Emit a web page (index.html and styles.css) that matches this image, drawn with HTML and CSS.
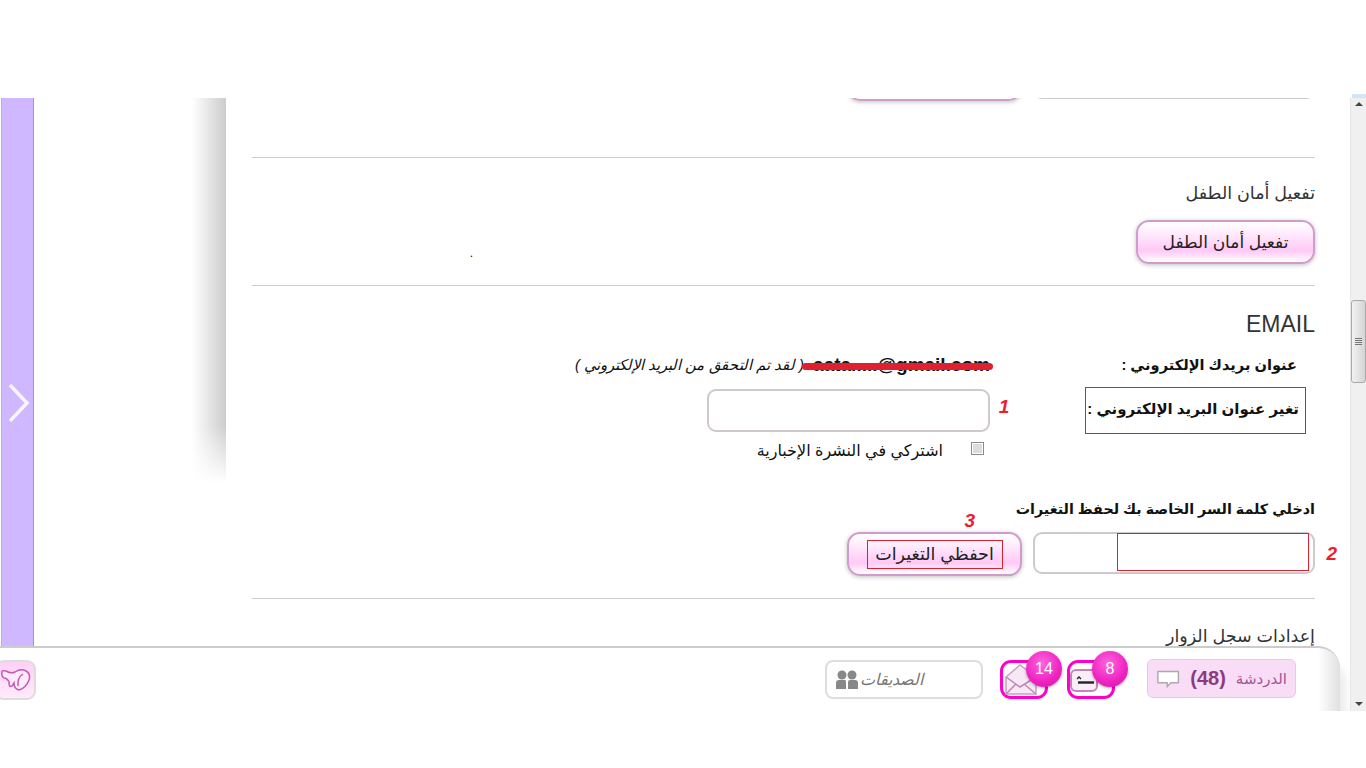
FILE: index.html
```html
<!DOCTYPE html>
<html lang="ar">
<head>
    <meta charset="UTF-8">
    <title>إعدادات الحساب</title>
    <link rel="stylesheet" href="styles.css">
</head>
<body>
    <div class="top-sliver"></div>
    <div class="viewport">
        <div class="rail">
            <svg class="rail-arrow" width="22" height="40" viewBox="0 0 22 40"><path d="M2 2 L19 20 L2 38" fill="none" stroke="#fff" stroke-width="3.5" opacity=".85"/></svg>
        </div>
        <div class="drop-shadow"></div>

        <div class="content" dir="rtl">
            <div class="section section-first">
                <div class="save-row">
                    <div class="field field-wide"></div>
                    <button class="btn btn-save"></button>
                </div>
            </div>

            <div class="section section-child">
                <h2>تفعيل أمان الطفل</h2>
                <div class="child-row">
                    <button class="btn btn-child">تفعيل أمان الطفل</button>
                    <span class="dot">.</span>
                </div>
            </div>

            <div class="section section-email">
                <h2 class="email-title">EMAIL</h2>
                <div class="email-row">
                    <b class="email-label">عنوان بريدك الإلكتروني :</b>
                    <span class="email-value" dir="ltr">aata.....@gmail.com<i class="strike"></i></span>
                    <i class="email-note">( لقد تم التحقق من البريد الإلكتروني )</i>
                </div>
                <div class="change-row">
                    <b class="change-label">تغير عنوان البريد الإلكتروني :</b>
                    <span class="mark mark-one">1</span>
                    <div class="field field-email"></div>
                </div>
                <label class="news-row">
                    <input class="news-check" type="checkbox">
                    <span>اشتركي في النشرة الإخبارية</span>
                </label>
                <b class="pass-label">ادخلي كلمة السر الخاصة بك لحفظ التغيرات</b>
                <div class="save-row">
                    <div class="field field-wide">
                        <div class="pass-box"></div>
                        <span class="mark mark-two">2</span>
                    </div>
                    <button class="btn btn-save">
                        <span class="mark mark-three">3</span>
                        <span class="save-text">احفظي التغيرات</span>
                    </button>
                </div>
            </div>

            <div class="section section-last">
                <h2>إعدادات سجل الزوار</h2>
            </div>
        </div>

        <div class="scrollbar">
            <span class="arrow-up"></span>
            <div class="thumb"><span class="grip"></span></div>
            <span class="arrow-down"></span>
        </div>

        <div class="bottom-bar" dir="rtl">
            <div class="bar-items">
                <div class="chat">
                    <span class="chat-name">الدردشة</span>
                    <b class="chat-count">(48)</b>
                    <svg width="26" height="20" viewBox="0 0 26 20"><path d="M2 2 H24 V14 H16 L12 18 V14 H2 Z" fill="#fff" stroke="#aaa" stroke-width="1.5"/></svg>
                </div>
                <div class="notice notice-photo">
                    <svg class="notice-icon" width="30" height="26" viewBox="0 0 30 26"><rect x="1" y="3" width="26" height="21" rx="5" fill="#fbeef9" stroke="#c285b8" stroke-width="2"/><path d="M7 12 L9 10 L11 12" fill="none" stroke="#222" stroke-width="1.3"/><path d="M8 15.500 H24" stroke="#222" stroke-width="2.400"/></svg>
                    <span class="badge badge-photo">8</span>
                </div>
                <div class="notice notice-mail">
                    <svg class="notice-icon" width="36" height="32" viewBox="0 0 36 32"><path d="M3 13 L17 1 L33 13 V30 H3 Z" fill="#f6e9f3" stroke="#c9a0c2" stroke-width="1.500"/><path d="M3 13 L17 23 L33 13 M3 30 L13 20 M33 30 L21 20" fill="none" stroke="#c285b8" stroke-width="1.500"/></svg>
                    <span class="badge badge-mail">14</span>
                </div>
                <div class="friends">
                    <i class="friends-name">الصديقات</i>
                    <svg width="24" height="20" viewBox="0 0 24 20"><circle cx="7" cy="5" r="4.500" fill="#888"/><circle cx="17" cy="5" r="4.500" fill="#888"/><path d="M1 19 V13 Q1 10 4 10 H10 Q11 10 11 12 V19 Z M13 19 V12 Q13 10 15 10 H20 Q23 10 23 13 V19 Z" fill="#888"/></svg>
                </div>
            </div>
            <div class="logo-btn">
                <svg width="30" height="24" viewBox="0 0 30 24"><path d="M1 4 Q1 2 5 3 Q10 6 14 4 Q20 0 25 3 Q30 6 28 12 Q25 20 18 22 Q13 21 13 15 L11 18 Q8 20 8 14 Q6 10 3 10 Q0 8 1 4 Z" fill="#ffeafb" stroke="#c25ab4" stroke-width="1.500"/><path d="M22 6 Q16 10 17 18" fill="none" stroke="#c25ab4" stroke-width="1.500"/></svg>
            </div>
        </div>
    </div>
</body>
</html>
```

FILE: styles.css
```css
html, body {
    margin: 0;
    padding: 0;
    background: #fff;
    overflow: hidden;
}
body {
    height: 768px;
    font-family: "Liberation Sans", "DejaVu Sans", sans-serif;
    color: #111;
}
.top-sliver {
    height: 4px;
    width: 14px;
    margin: 94px 0 0 auto;
    background: #d5e4f5;
}
.viewport {
    position: relative;
    display: flex;
    height: 613px;
    overflow: hidden;
}

/* left rail */
.rail {
    flex: none;
    position: relative;
    width: 31px;
    margin-left: 1px;
    background: #cfb8ff;
    border-left: 1px solid #c0a6ee;
    border-right: 1px solid #b08cd8;
}
.rail-arrow {
    position: absolute;
    left: 6px;
    top: 285px;
}
.drop-shadow {
    flex: none;
    width: 34px;
    height: 385px;
    margin-left: 158px;
    background:
        linear-gradient(to bottom, rgba(255,255,255,0) 85%, #fff 100%),
        linear-gradient(to right, rgba(255,255,255,0), #ccc);
}

/* content */
.content {
    flex: none;
    width: 1063px;
    margin-left: 26px;
}
h2 {
    margin: 0;
    font-size: 17.5px;
    line-height: 26px;
    font-weight: normal;
    color: #333;
}
.section {
    border-bottom: 1px solid #ccc;
}
.section-first {
    margin-top: -41px;
    padding-bottom: 56px;
}
.section-child {
    padding: 22px 0 21px;
}
.section-email {
    padding: 25px 0 22px;
}
.section-last {
    padding-top: 24px;
    border-bottom: 0;
}
.email-title {
    font-size: 23px;
}
.field {
    box-sizing: border-box;
    background: #fff;
    border: 2px solid #cfc8cf;
    border-radius: 9px;
}
.btn {
    display: block;
    position: relative;
    box-sizing: border-box;
    height: 44px;
    padding: 0;
    font-family: inherit;
    font-size: 17px;
    color: #222;
    border: 2px solid #d09ccc;
    border-radius: 13px;
    background: linear-gradient(to bottom, #fff 0%, #ffeafd 30%, #ffc9f6 72%, #fff 100%);
    box-shadow: 0 1px 4px rgba(0,0,0,.25);
}
.child-row {
    display: flex;
    margin-top: 14px;
}
.btn-child {
    width: 179px;
}
.dot {
    align-self: flex-end;
    margin-right: 663px;
    line-height: 22px;
    font-size: 12px;
}
.email-row {
    display: flex;
    margin-top: 18px;
    line-height: 20px;
    font-size: 14.6px;
}
.email-label {
    flex: none;
    width: 175px;
    margin-right: 18px;
    white-space: nowrap;
}
.email-value {
    flex: none;
    position: relative;
    box-sizing: border-box;
    width: 190px;
    margin-right: 130px;
    padding-right: 2px;
    font-size: 19px;
    font-weight: bold;
    text-align: right;
    white-space: nowrap;
}
.strike {
    position: absolute;
    left: 0;
    right: -1px;
    top: 8px;
    height: 7px;
    border-radius: 4px;
    background: #e0202e;
}
.email-note {
    margin-right: -2px;
    white-space: nowrap;
    font-size: 14.9px;
}
.change-row {
    display: flex;
    align-items: center;
    margin-top: 12px;
}
.change-label {
    flex: none;
    box-sizing: border-box;
    width: 221px;
    height: 47px;
    margin-right: 9px;
    padding-right: 6px;
    font-size: 15px;
    line-height: 41px;
    white-space: nowrap;
    border: 1px solid #d8232f;
}
.mark {
    color: #ee1c2e;
    font: italic bold 19px "Liberation Sans", sans-serif;
}
.mark-one {
    width: 16px;
    margin: 0 73px 8px 0;
    text-align: center;
}
.field-email {
    width: 283px;
    height: 43px;
    margin-right: 6px;
}
.news-row {
    display: flex;
    align-items: center;
    height: 20px;
    margin-top: 6px;
    padding-right: 331px;
    font-size: 16px;
}
.news-check {
    appearance: none;
    box-sizing: border-box;
    width: 13px;
    height: 13px;
    margin: -3px 0 0 28px;
    border: 1px solid #8a8a8a;
    background: #dcdcdc;
    box-shadow: inset 0 0 0 1px #fff;
}
.pass-label {
    display: block;
    margin-top: 39px;
    line-height: 20px;
    font-size: 14.3px;
}
.save-row {
    display: flex;
    align-items: flex-start;
    margin-top: 13px;
}
.section-first .save-row {
    margin-top: 0;
}
.field-wide {
    position: relative;
    width: 282px;
    height: 42px;
    padding-right: 4px;
}
.pass-box {
    box-sizing: border-box;
    width: 192px;
    height: 38px;
    margin-top: -1px;
    border: 1px solid #d8232f;
    background: #fff;
}
.mark-two {
    position: absolute;
    right: -24px;
    top: 9px;
}
.btn-save {
    width: 175px;
    margin-right: 11px;
}
.mark-three {
    position: absolute;
    right: 45px;
    top: -24px;
}
.save-text {
    display: block;
    box-sizing: border-box;
    width: 136px;
    height: 29px;
    margin: 0 auto;
    font-size: 17.5px;
    line-height: 27px;
    border: 1px solid #d8232f;
    white-space: nowrap;
}

/* scrollbar */
.scrollbar {
    position: absolute;
    right: 0;
    top: 0;
    bottom: 0;
    z-index: 1;
    width: 15px;
    background: #f0f0f0;
    border-left: 1px solid #e6e6e6;
}
.arrow-up, .arrow-down {
    position: absolute;
    left: 4px;
    width: 0;
    height: 0;
    border-left: 4px solid transparent;
    border-right: 4px solid transparent;
}
.arrow-up {
    top: 4px;
    border-bottom: 4px solid #444;
}
.arrow-down {
    bottom: 5px;
    border-top: 4px solid #444;
}
.thumb {
    position: absolute;
    left: 0;
    top: 202px;
    box-sizing: border-box;
    width: 15px;
    height: 83px;
    border: 1px solid #aaa;
    border-radius: 3px;
    background: linear-gradient(to right, #f2f2f2, #d4d4d4);
}
.grip {
    position: absolute;
    left: 3px;
    top: 37px;
    width: 7px;
    height: 7px;
    background: repeating-linear-gradient(to bottom, #777 0, #777 1px, transparent 1px, transparent 2px);
}

/* bottom bar */
.bottom-bar {
    position: absolute;
    left: 0;
    top: 548px;
    display: flex;
    justify-content: space-between;
    box-sizing: border-box;
    width: 1340px;
    height: 65px;
    background: linear-gradient(to right, #fff 1318px, #e0e0e0 1340px);
    border-top: 2px solid #ccc;
    border-top-right-radius: 22px;
    box-shadow: 10px 14px 8px -4px rgba(0,0,0,.08);
}
.bar-items {
    display: flex;
    align-items: flex-start;
    padding: 11px 44px 0 0;
}
.chat {
    display: flex;
    align-items: center;
    box-sizing: border-box;
    width: 149px;
    height: 39px;
    padding: 0 8px;
    background: #f9dcf6;
    border: 1px solid #ecc6ea;
    border-radius: 6px;
}
.chat-name {
    font-size: 15px;
    color: #a25795;
}
.chat-count {
    margin: 0 10px;
    font-size: 20px;
    color: #8c3a80;
    direction: ltr;
}
.notice {
    position: relative;
    box-sizing: border-box;
    display: flex;
    align-items: center;
    width: 48px;
    height: 39px;
    margin: 1px 32px 0 0;
    border: 3px solid #ff00cc;
    border-radius: 11px;
    background: #fff;
}
.notice-icon {
    margin-right: auto;
}
.notice-mail {
    margin-right: 19px;
}
.badge {
    position: absolute;
    top: -12px;
    width: 36px;
    height: 36px;
    line-height: 36px;
    border-radius: 50%;
    text-align: center;
    font-size: 16px;
    color: #fff;
    background: radial-gradient(circle at 45% 35%, #ff66e0, #ee22c0 60%, #c81ca4);
    box-shadow: 0 1px 3px rgba(0,0,0,.35);
}
.badge-photo {
    right: -16px;
}
.badge-mail {
    right: -17px;
}
.friends {
    display: flex;
    align-items: center;
    justify-content: space-between;
    box-sizing: border-box;
    width: 158px;
    height: 39px;
    margin: 1px 17px 0 0;
    padding: 0 58px 0 8px;
    background: #fff;
    border: 2px solid #ddd;
    border-radius: 8px;
}
.friends-name {
    font-size: 16px;
    color: #777;
    white-space: nowrap;
}
.logo-btn {
    display: flex;
    align-items: center;
    justify-content: center;
    box-sizing: border-box;
    width: 41px;
    height: 40px;
    margin: 12px 0 0 -5px;
    background: linear-gradient(to bottom, #ffd0f6, #ffeafb);
    border: 2px solid #ddd;
    border-radius: 9px;
}
```
